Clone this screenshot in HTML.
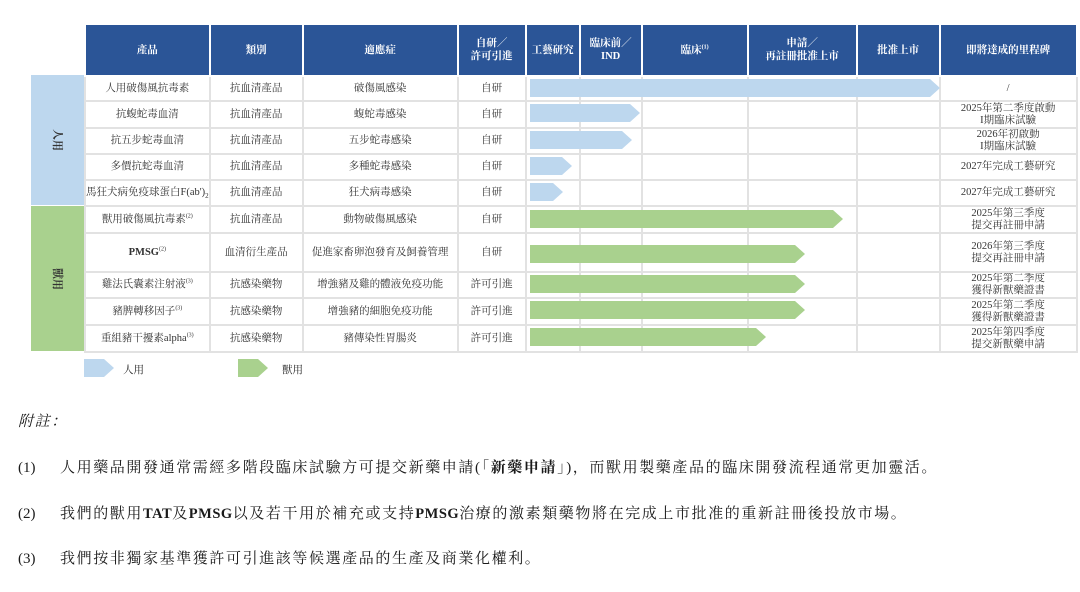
<!DOCTYPE html>
<html><head><meta charset="utf-8"><style>
body{margin:0;width:1080px;height:592px;background:#fff;position:relative;overflow:hidden;font-family:"Liberation Serif","Noto Serif CJK SC",serif;color:#222}
table{position:absolute;left:84px;top:23px;border-collapse:collapse;table-layout:fixed;font-size:10.5px}
td,th{padding:0;text-align:center;vertical-align:middle;line-height:12px;overflow:hidden}
th{background:#2b5597;color:#fff;font-weight:bold;border:2px solid #fff;font-size:10.5px;line-height:13px}
td{border:2px solid #e2e2e2;color:#333}
.side{position:absolute;left:31px;width:53px;display:flex;align-items:center;justify-content:center;font-size:11px;font-weight:bold;color:#333}
.side span{transform:rotate(90deg);display:block}
.bar{position:absolute;height:18px}
.b{background:#bdd7ee}.g{background:#a9d18e}
.bar{clip-path:polygon(0 0,calc(100% - 10px) 0,100% 50%,calc(100% - 10px) 100%,0 100%)}
sup{font-size:6px;line-height:0}
.note{position:absolute;left:18px;font-size:15px;letter-spacing:1.6px;white-space:nowrap;color:#1a1a1a}
.note .n{display:inline-block;width:42px;letter-spacing:0}
.l{letter-spacing:0.5px;font-weight:bold;font-size:14.5px}
</style></head><body>
<table>
<colgroup><col style="width:124px"><col style="width:93px"><col style="width:155px"><col style="width:68px"><col style="width:54px"><col style="width:62px"><col style="width:106px"><col style="width:109px"><col style="width:83px"><col style="width:137px"></colgroup>
<tr style="height:52px"><th>產品</th><th>類別</th><th>適應症</th><th>自研／<br>許可引進</th><th>工藝研究</th><th>臨床前／<br>IND</th><th>臨床<sup>(1)</sup></th><th>申請／<br>再註冊批准上市</th><th>批准上市</th><th>即將達成的里程碑</th></tr>
<tr style="height:25px"><td>人用破傷風抗毒素</td><td>抗血清產品</td><td>破傷風感染</td><td>自研</td><td></td><td></td><td></td><td></td><td></td><td>/</td></tr>
<tr style="height:27px"><td>抗蝮蛇毒血清</td><td>抗血清產品</td><td>蝮蛇毒感染</td><td>自研</td><td></td><td></td><td></td><td></td><td></td><td>2025年第二季度啟動<br>I期臨床試驗</td></tr>
<tr style="height:26px"><td>抗五步蛇毒血清</td><td>抗血清產品</td><td>五步蛇毒感染</td><td>自研</td><td></td><td></td><td></td><td></td><td></td><td>2026年初啟動<br>I期臨床試驗</td></tr>
<tr style="height:26px"><td>多價抗蛇毒血清</td><td>抗血清產品</td><td>多種蛇毒感染</td><td>自研</td><td></td><td></td><td></td><td></td><td></td><td>2027年完成工藝研究</td></tr>
<tr style="height:26px"><td style="white-space:nowrap">馬狂犬病免疫球蛋白F(ab')<sub style="font-size:7px;line-height:0">2</sub></td><td>抗血清產品</td><td>狂犬病毒感染</td><td>自研</td><td></td><td></td><td></td><td></td><td></td><td>2027年完成工藝研究</td></tr>
<tr style="height:27px"><td>獸用破傷風抗毒素<sup>(2)</sup></td><td>抗血清產品</td><td>動物破傷風感染</td><td>自研</td><td></td><td></td><td></td><td></td><td></td><td>2025年第三季度<br>提交再註冊申請</td></tr>
<tr style="height:39px"><td><b>PMSG</b><sup>(2)</sup></td><td>血清衍生產品</td><td>促進家畜卵泡發育及飼養管理</td><td>自研</td><td></td><td></td><td></td><td></td><td></td><td>2026年第三季度<br>提交再註冊申請</td></tr>
<tr style="height:26px"><td>雞法氏囊素注射液<sup>(3)</sup></td><td>抗感染藥物</td><td>增強豬及雞的體液免疫功能</td><td>許可引進</td><td></td><td></td><td></td><td></td><td></td><td>2025年第二季度<br>獲得新獸藥證書</td></tr>
<tr style="height:27px"><td>豬脾轉移因子<sup>(3)</sup></td><td>抗感染藥物</td><td>增強豬的細胞免疫功能</td><td>許可引進</td><td></td><td></td><td></td><td></td><td></td><td>2025年第二季度<br>獲得新獸藥證書</td></tr>
<tr style="height:27px"><td>重組豬干擾素alpha<sup>(3)</sup></td><td>抗感染藥物</td><td>豬傳染性胃腸炎</td><td>許可引進</td><td></td><td></td><td></td><td></td><td></td><td>2025年第四季度<br>提交新獸藥申請</td></tr>
</table>
<div class="side b" style="top:75px;height:130px"><span>人用</span></div>
<div class="side g" style="top:206px;height:145px"><span>獸用</span></div>
<div class="bar b" style="left:530px;top:79px;width:410px"></div>
<div class="bar b" style="left:530px;top:104px;width:110px"></div>
<div class="bar b" style="left:530px;top:131px;width:102px"></div>
<div class="bar b" style="left:530px;top:157px;width:42px"></div>
<div class="bar b" style="left:530px;top:183px;width:33px"></div>
<div class="bar g" style="left:530px;top:210px;width:313px"></div>
<div class="bar g" style="left:530px;top:245px;width:275px"></div>
<div class="bar g" style="left:530px;top:275px;width:275px"></div>
<div class="bar g" style="left:530px;top:301px;width:275px"></div>
<div class="bar g" style="left:530px;top:328px;width:236px"></div>
<div class="bar b" style="left:84px;top:359px;width:30px;height:18px"></div>
<div style="position:absolute;left:123px;top:362px;font-size:10.5px">人用</div>
<div class="bar g" style="left:238px;top:359px;width:30px;height:18px"></div>
<div style="position:absolute;left:282px;top:362px;font-size:10.5px">獸用</div>
<div class="note" style="top:410px;font-style:italic">附註：</div>
<div class="note" style="top:456px"><span class="n">(1)</span>人用藥品開發通常需經多階段臨床試驗方可提交新藥申請(「<b>新藥申請</b>」)，而獸用製藥產品的臨床開發流程通常更加靈活。</div>
<div class="note" style="top:502px"><span class="n">(2)</span>我們的獸用<span class="l">TAT</span>及<span class="l">PMSG</span>以及若干用於補充或支持<span class="l">PMSG</span>治療的激素類藥物將在完成上市批准的重新註冊後投放市場。</div>
<div class="note" style="top:547px"><span class="n">(3)</span>我們按非獨家基準獲許可引進該等候選產品的生產及商業化權利。</div>
</body></html>
